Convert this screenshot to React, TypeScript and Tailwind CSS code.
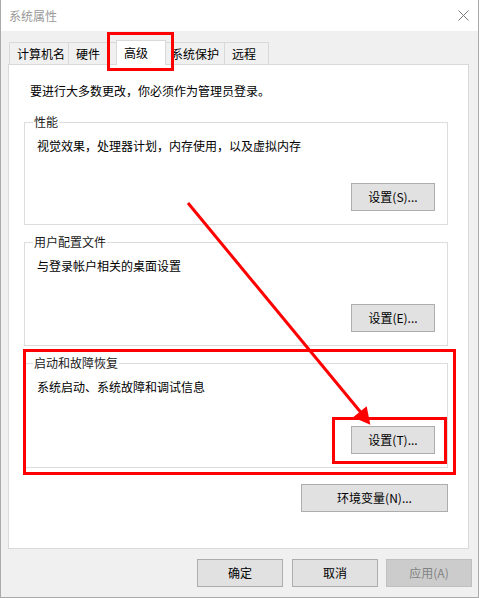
import React from "react";

type Tab = {
	label: string;
	width: string;
	active?: boolean;
};

const tabs: Tab[] = [
	{ label: "计算机名", width: "w-[60px]" },
	{ label: "硬件", width: "w-[50px]" },
	{ label: "高级", width: "w-[50px]", active: true },
	{ label: "系统保护", width: "w-[62px]" },
	{ label: "远程", width: "w-[45px]" },
];

const Button: React.FC<{ label: string; className?: string; disabled?: boolean }> = ({
	label,
	className = "",
	disabled,
}) => (
	<button
		className={`h-[28px] border text-[12px] leading-[16px] flex items-center justify-center ${
			disabled
				? "bg-[#cccccc] border-[#bfbfbf] text-[#838383]"
				: "bg-[#e1e1e1] border-[#adadad] text-black"
		} ${className}`}>
		{label}
	</button>
);

const GroupBox: React.FC<{
	title: string;
	text: string;
	button: string;
	height: string;
	className?: string;
}> = ({ title, text, button, height, className = "" }) => (
	<div
		className={`relative w-[424px] ${height} border border-[#dcdcdc] flex flex-col pl-[12px] pr-[12px] pt-[15px] pb-[13px] ${className}`}>
		<span className="absolute -top-[9px] left-[8px] bg-white px-px leading-[16px] text-[#1a1a1a]">
			{title}
		</span>
		<p className="leading-[16px]">{text}</p>
		<div className="mt-auto flex justify-end">
			<Button
				label={button}
				className="w-[84px]"
			/>
		</div>
	</div>
);

const App: React.FC = () => {
	return (
		<div
			className="relative w-[479px] h-[598px] bg-[#f0f0f0] border border-t-0 border-[#aaaaaa] flex flex-col text-[12px] text-black overflow-hidden"
			style={{ fontFamily: '"Noto Sans CJK SC", "Noto Sans", sans-serif' }}>
			{/* title bar */}
			<div className="h-[31px] bg-white flex items-center justify-between pl-[8px] pr-[9px] shrink-0">
				<span className="text-[#999999] leading-[16px]">系统属性</span>
				<svg
					width="11"
					height="11"
					viewBox="0 0 11 11">
					<path
						d="M0.5 0.5 L10.5 10.5 M10.5 0.5 L0.5 10.5"
						stroke="#7a7a7a"
						strokeWidth="1"
					/>
				</svg>
			</div>

			<div className="pl-[7px] pt-[9px] flex flex-col">
				{/* tabs */}
				<div className="flex items-end h-[24px] pl-px">
					{tabs.map((tab) =>
						tab.active ? (
							<div
								key={tab.label}
								className={`relative z-10 -mx-[2px] -mb-px h-[25px] ${tab.width} bg-white border border-b-0 border-[#d9d9d9] pl-[7px] flex items-center leading-[16px]`}>
								{tab.label}
							</div>
						) : (
							<div
								key={tab.label}
								className={`h-[22px] ${tab.width} bg-[#f0f0f0] border border-b-0 border-[#d9d9d9] -ml-px first:ml-0 pl-[7px] flex items-center leading-[16px]`}>
								{tab.label}
							</div>
						)
					)}
				</div>

				{/* panel */}
				<div className="w-[461px] h-[485px] bg-white border border-[#d9d9d9] pl-[15px] pt-[18px] flex flex-col">
					<p className="ml-[6px] leading-[16px]">要进行大多数更改，你必须作为管理员登录。</p>

					<GroupBox
						title="性能"
						text="视觉效果，处理器计划，内存使用，以及虚拟内存"
						button="设置(S)..."
						height="h-[103px]"
						className="mt-[23px]"
					/>
					<GroupBox
						title="用户配置文件"
						text="与登录帐户相关的桌面设置"
						button="设置(E)..."
						height="h-[104px]"
						className="mt-[17px]"
					/>
					<GroupBox
						title="启动和故障恢复"
						text="系统启动、系统故障和调试信息"
						button="设置(T)..."
						height="h-[105px]"
						className="mt-[17px]"
					/>

					<div className="w-[424px] flex justify-end mt-[16px]">
						<Button
							label="环境变量(N)..."
							className="w-[147px]"
						/>
					</div>
				</div>

				{/* dialog buttons */}
				<div className="flex justify-end mt-[10px] pr-[6px]">
					<Button
						label="确定"
						className="w-[86px] mr-[9px]"
					/>
					<Button
						label="取消"
						className="w-[86px] mr-[8px]"
					/>
					<Button
						label="应用(A)"
						className="w-[86px]"
						disabled
					/>
				</div>
			</div>

			{/* red markup drawn on top */}
			<div className="absolute left-[106px] top-[32px] w-[67px] h-[39px] border-[3px] border-[#ff0000] pointer-events-none" />
			<div className="absolute left-[22px] top-[349px] w-[433px] h-[126px] border-[3px] border-[#ff0000] pointer-events-none" />
			<div className="absolute left-[331px] top-[417px] w-[115px] h-[47px] border-[3px] border-[#ff0000] pointer-events-none" />
			<svg
				className="absolute -left-px top-0 pointer-events-none"
				width="479"
				height="598"
				viewBox="0 0 479 598">
				<line
					x1="188"
					y1="203"
					x2="363"
					y2="415"
					stroke="#ff0000"
					strokeWidth="3"
				/>
				<polygon
					points="369,423 355,417 366,408"
					fill="#ff0000"
					stroke="#ff0000"
					strokeWidth="2"
					strokeLinejoin="miter"
				/>
			</svg>
		</div>
	);
};

export default App;
